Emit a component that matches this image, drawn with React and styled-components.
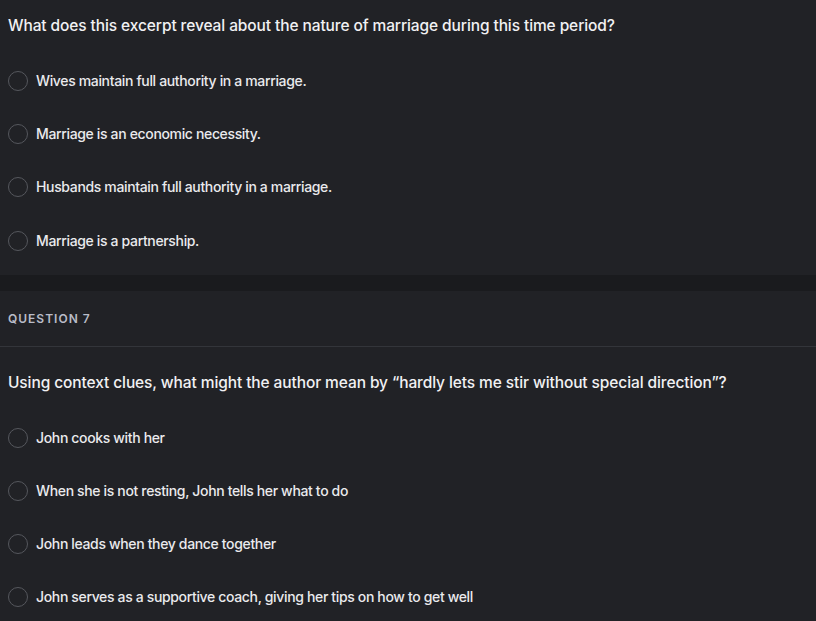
import React from 'react';
import styled, { createGlobalStyle } from 'styled-components';

const GlobalStyle = createGlobalStyle`
  html, body {
    margin: 0;
    padding: 0;
    background: #212226;
  }
  body {
    font-family: Inter, "Noto Sans", "Liberation Sans", sans-serif;
    color: #ececef;
  }
`;

const Page = styled.div`
  width: 816px;
  height: 621px;
  overflow: hidden;
  background: #212226;
`;

const QuestionBlock = styled.section`
  padding: ${({ $top }) => $top}px 8px 24px;
`;

const Prompt = styled.h3`
  margin: 0 0 35px;
  font-size: 15.5px;
  font-weight: 500;
  line-height: 20px;
  color: #f1f1f3;
  letter-spacing: -0.1px;
`;

const Options = styled.ul`
  list-style: none;
  margin: 0;
  padding: 0;
  display: flex;
  flex-direction: column;
  gap: 33.2px;
`;

const Option = styled.li`
  display: flex;
  align-items: center;
  gap: 8px;
  height: 20px;
`;

const Radio = styled.span`
  flex: 0 0 auto;
  width: 18px;
  height: 18px;
  border-radius: 50%;
  border: 1px solid #55575d;
`;

const OptionText = styled.span`
  font-size: 14px;
  font-weight: 500;
  line-height: 20px;
  color: #eaeaed;
  letter-spacing: -0.35px;
`;

const Band = styled.div`
  height: 16px;
  background: #1a1b1e;
`;

const Header = styled.div`
  height: 55px;
  padding: 0 8px;
  display: flex;
  align-items: center;
  border-bottom: 1px solid #33353a;
`;

const Label = styled.span`
  font-size: 12px;
  font-weight: 600;
  letter-spacing: 1px;
  color: #b9bcc8;
  text-transform: uppercase;
`;

const first = [
  'Wives maintain full authority in a marriage.',
  'Marriage is an economic necessity.',
  'Husbands maintain full authority in a marriage.',
  'Marriage is a partnership.',
];

const second = [
  'John cooks with her',
  'When she is not resting, John tells her what to do',
  'John leads when they dance together',
  'John serves as a supportive coach, giving her tips on how to get well',
];

const Question = ({ prompt, options, top }) => (
  <QuestionBlock $top={top}>
    <Prompt>{prompt}</Prompt>
    <Options>
      {options.map((text) => (
        <Option key={text}>
          <Radio />
          <OptionText>{text}</OptionText>
        </Option>
      ))}
    </Options>
  </QuestionBlock>
);

export default function App() {
  return (
    <Page>
      <GlobalStyle />
      <Question
        top={16}
        prompt="What does this excerpt reveal about the nature of marriage during this time period?"
        options={first}
      />
      <Band />
      <Header>
        <Label>Question 7</Label>
      </Header>
      <Question
        top={26}
        prompt="Using context clues, what might the author mean by “hardly lets me stir without special direction”?"
        options={second}
      />
    </Page>
  );
}
